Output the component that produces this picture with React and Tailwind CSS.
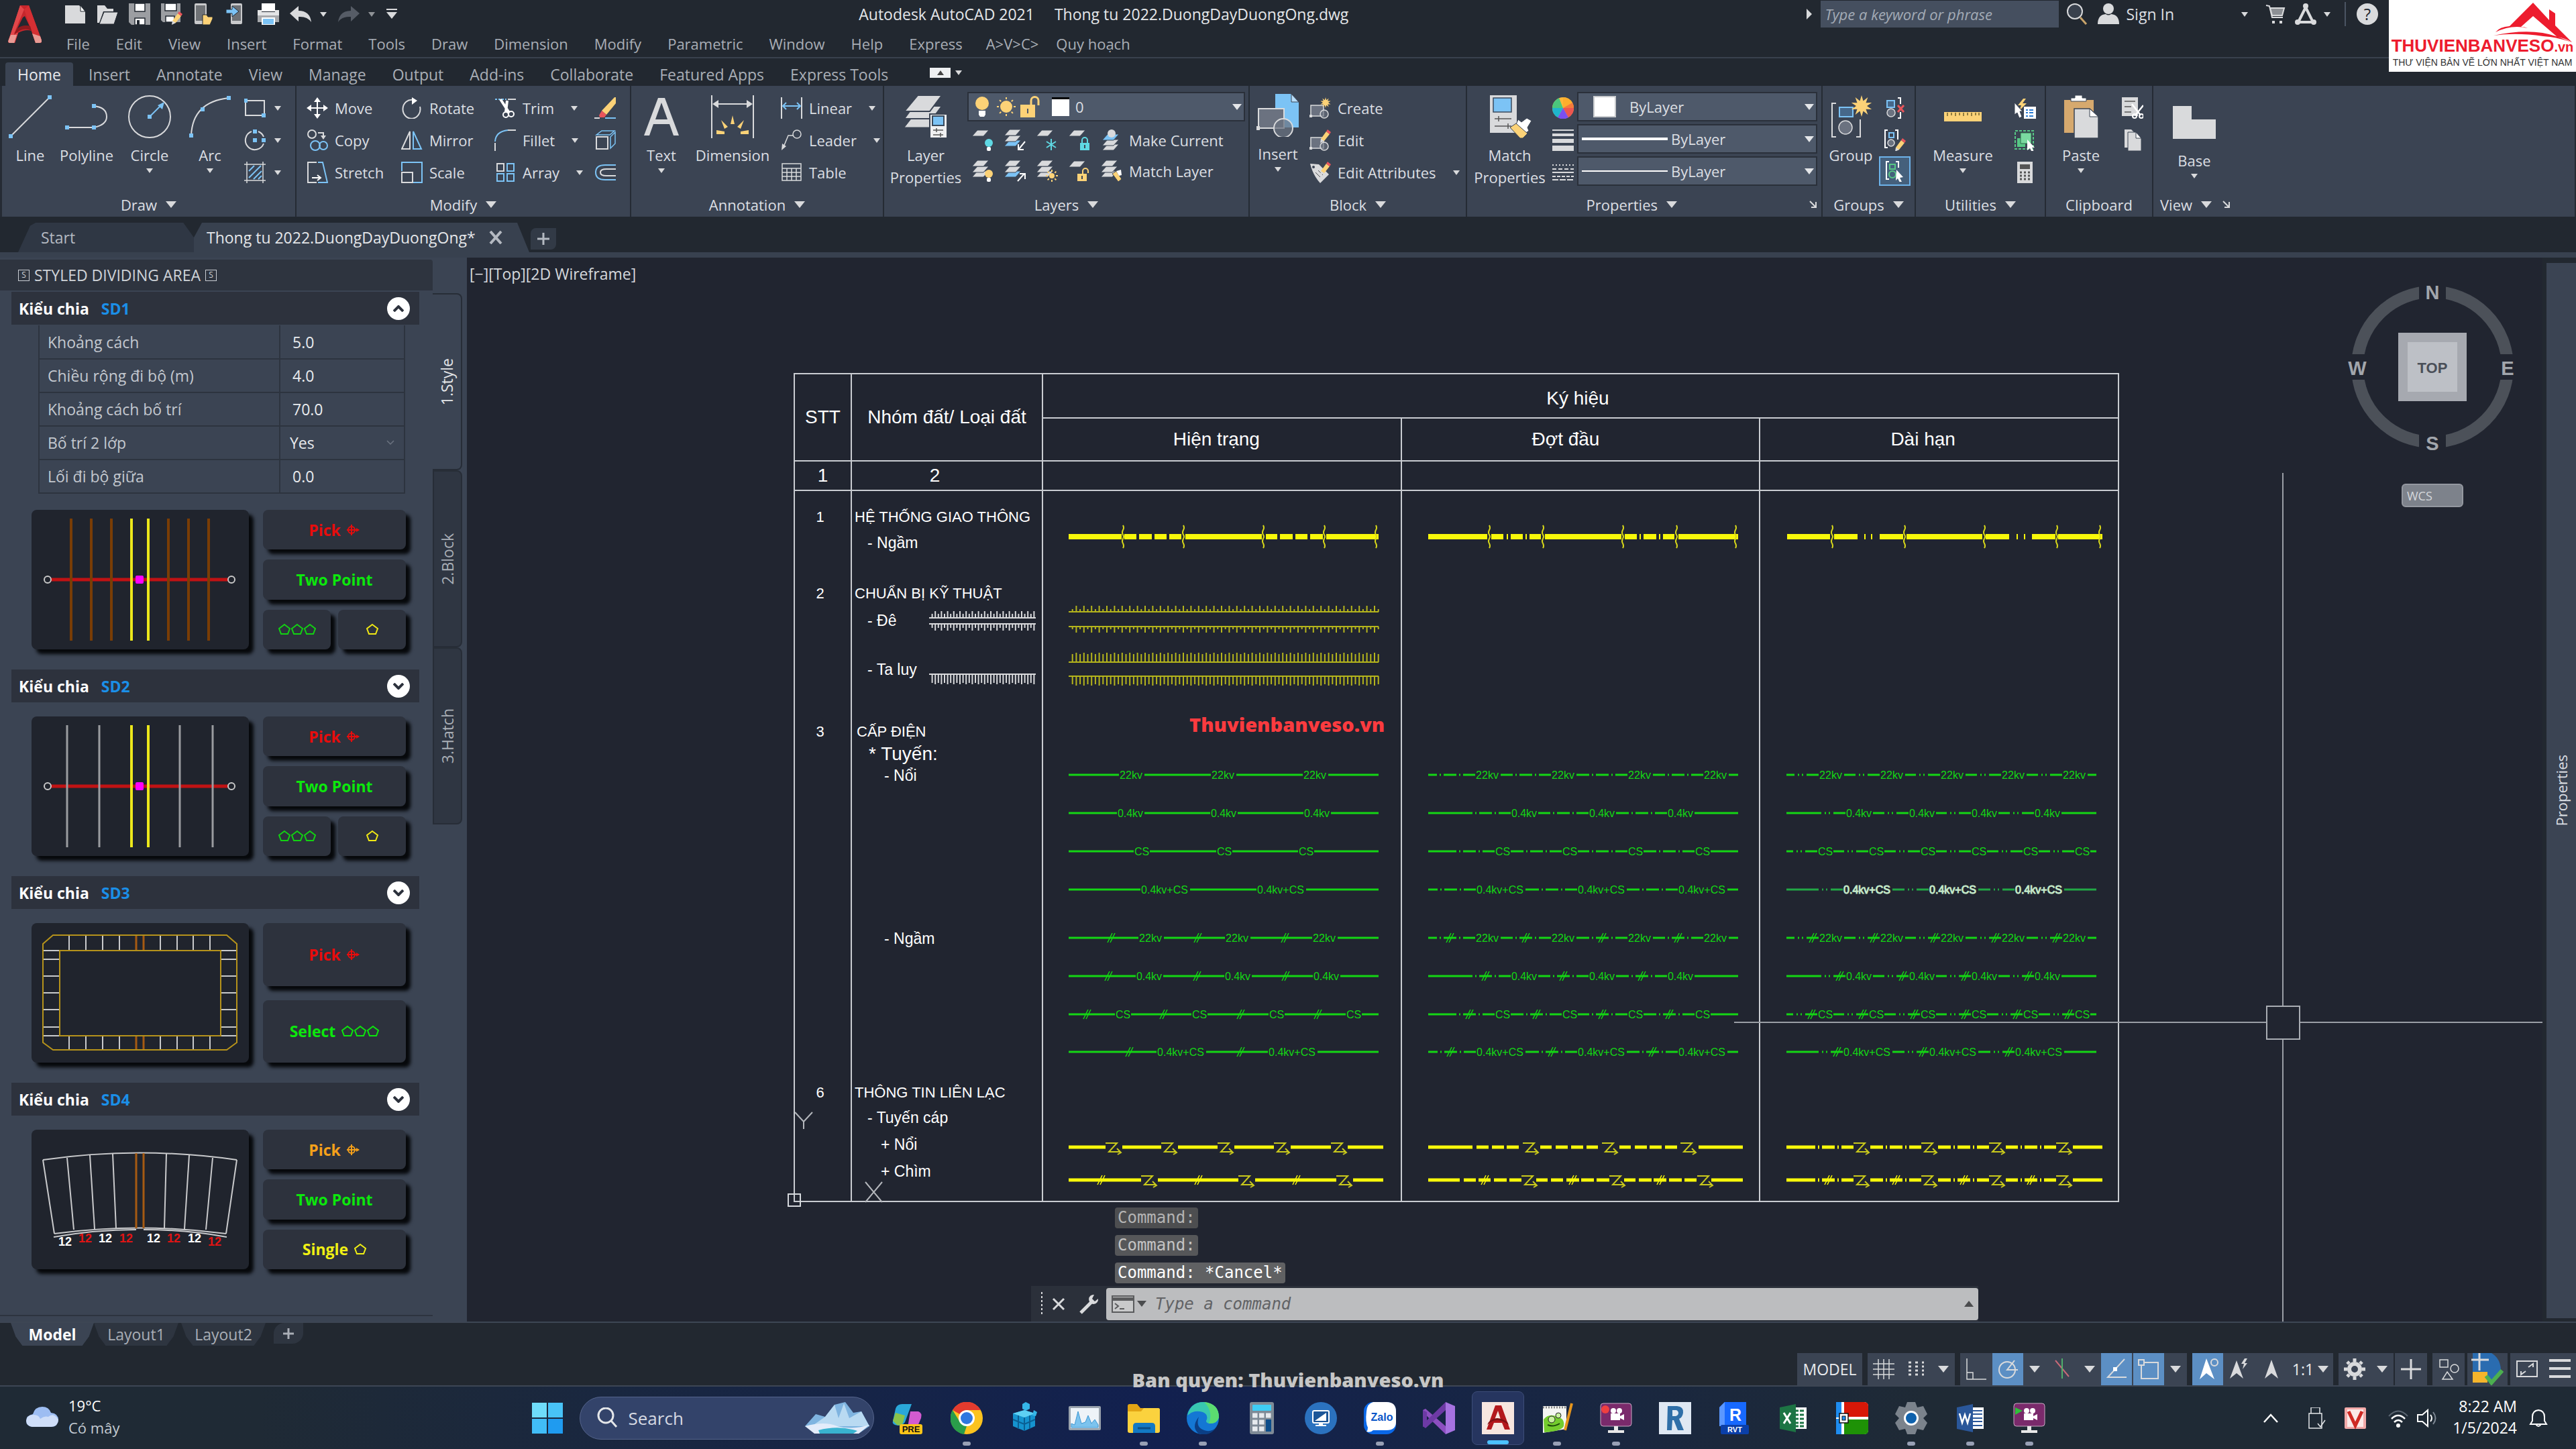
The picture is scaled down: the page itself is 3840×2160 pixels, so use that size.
import React from "react";

const W = "#d9dadc";
const B = "#7cc3f5";
const Y = "#fcd277";

/* ---------- icon primitives ---------- */

function Ico({ s = 32, w, h, vb, children, className = "" }) {
  return (
    <svg
      aria-hidden="true"
      width={w || s}
      height={h || s}
      viewBox={vb || "0 0 32 32"}
      fill="none"
      stroke={W}
      strokeWidth="2"
      className={"shrink-0 " + className}
    >
      {children}
    </svg>
  );
}

function Down({ big = false, className = "" }) {
  return big ? (
    <svg aria-hidden="true" width="16" height="10" viewBox="0 0 16 10" className={"shrink-0 " + className}>
      <path d="M0 0H16L8 10Z" fill={W} />
    </svg>
  ) : (
    <svg aria-hidden="true" width="10" height="7" viewBox="0 0 10 7" className={"shrink-0 " + className}>
      <path d="M0 0H10L5 7Z" fill={W} />
    </svg>
  );
}

const Dot = ({ x, y, r = 3 }) => <rect x={x - r} y={y - r} width={2 * r} height={2 * r} fill={B} stroke="none" />;
const Sheet = ({ x, y, c = W }) => <path d={`M${x + 8} ${y}h17l-8 9h-17z`} fill={c} stroke="#3b4453" strokeWidth="1" />;
const Pencil = ({ x = 0, y = 0 }) => (
  <g transform={`translate(${x} ${y})`} stroke="none">
    <path d="M2 14L10 3l5 4L7 17l-5 2z" fill={Y} />
    <path d="M10 3l2-3 5 4-2 3z" fill="#e9555b" />
    <path d="M2 14l5 3-6 3z" fill={W} />
  </g>
);
const Burst = ({ x, y, r }) => {
  let d = "";
  for (let i = 0; i < 20; i++) {
    const a = (i * Math.PI) / 10;
    const q = i % 2 ? r * 0.5 : r;
    d += (i ? "L" : "M") + (x + q * Math.sin(a)).toFixed(1) + " " + (y - q * Math.cos(a)).toFixed(1);
  }
  return <path d={d + "Z"} fill={Y} stroke="none" />;
};
const Bulb = ({ x, y, c = Y }) => (
  <g stroke="none">
    <circle cx={x} cy={y} r="6" fill={c} />
    <rect x={x - 3} y={y + 6} width="6" height="6" rx="2" fill="#fff" />
  </g>
);
const Lock = ({ x, y, c, open }) => (
  <g>
    <path d={open ? `M${x + 8} ${y + 8}v-4a4 4 0 0 1 8 0v3` : `M${x + 3} ${y + 8}v-4a4 4 0 0 1 8 0v4`} stroke={c} />
    <rect x={x} y={y + 8} width="14" height="11" fill={c} stroke="none" />
    <path d={`M${x + 7} ${y + 11}v5`} stroke="#3b4453" />
  </g>
);
const SunG = ({ x, y, r = 5 }) => (
  <g stroke={Y}>
    <circle cx={x} cy={y} r={r} fill={Y} stroke="none" />
    {[0, 45, 90, 135, 180, 225, 270, 315].map((a) => (
      <path key={a} d={`M${x} ${y - r - 2}v-3`} transform={`rotate(${a} ${x} ${y})`} />
    ))}
  </g>
);
const Stack = ({ c = W, y = 0 }) => (
  <g>
    <Sheet x={0} y={y + 16} c={c} />
    <Sheet x={0} y={y + 9} />
    <Sheet x={0} y={y} />
  </g>
);

/* ---------- title bar ---------- */

function AutocadA({ w = 50, h = 56 }) {
  return (
    <svg aria-hidden="true" width={w} height={h} viewBox="0 0 50 56">
      <path d="M18 0H31L50 52Q51 56 47 56H41L35 38Q26 35 15 41L10 56H3Q-1 56 1 51Z" fill="#c6262c" />
      <path d="M18 0L24 6 9 42 15 41 10 56H3Q-1 56 1 51Z" fill="#e2474a" />
      <path d="M22 18L13 36Q22 29 32 31L25 16Z" fill="#222830" />
      <path d="M31 0L50 52Q51 56 47 56H41L24 6Z" fill="#d52f33" />
      <path d="M9 44Q22 31 35 38L33 31Q22 28 13 35Z" fill="#8e1a1e" />
      <path d="M36 42L41 56H47Q51 56 50 52L48 46Z" fill="#e99a94" />
      <path d="M4 44L1 51Q-1 56 3 56H9L13 44Z" fill="#e99a94" />
    </svg>
  );
}

function QuickAccess() {
  const items = [
    ["New", "ml-0", <Ico key="i"><path d="M3 3H22L31 12V30H1V3Z" fill={W} stroke="none" /><path d="M24 3l7 9h-7z" fill="#fff" stroke="#222830" strokeWidth="1" /></Ico>],
    ["Open", "ml-4", <Ico key="i"><path d="M1 3h11l4 5h9v4H10L4 29H1z" fill={W} stroke="none" /><path d="M11 13h21l-6 18H4z" fill={W} stroke="#222830" strokeWidth="1" /></Ico>],
    ["Save", "ml-4", <Ico key="i"><path d="M0 0H32V32H4L0 28Z" fill="#9c9ea2" stroke="none" /><path d="M9 0H24V12H9ZM9 22H24V32H9Z" fill="#fff" stroke="#222830" strokeWidth="1.5" /><path d="M12 25h4v7h-4z" fill="#222830" stroke="none" /></Ico>],
    ["Save As", "ml-4", <Ico key="i"><path d="M0 0H29V28H3L0 25Z" fill="#9c9ea2" stroke="none" /><path d="M6 0H23V11H6ZM7 19H20V28H7Z" fill="#fff" stroke="#222830" strokeWidth="1.5" /><Pencil x={15} y={12} /></Ico>],
    ["Open from Web and Mobile", "ml-4", <Ico key="i"><rect x="2" y="0" width="18" height="31" rx="2" fill="#c9cacc" stroke="none" /><rect x="4" y="3" width="14" height="23" fill="#6f7276" stroke="none" /><path d="M14 17h6l2 3h7v3l-4 9H14z" fill={Y} stroke="#222830" strokeWidth="1" /></Ico>],
    ["Save to Web and Mobile", "ml-4", <Ico key="i"><rect x="8" y="0" width="17" height="31" rx="2" fill="#c9cacc" stroke="none" /><rect x="10" y="3" width="13" height="23" fill="#6f7276" stroke="none" /><path d="M1 9h9V4l10 8-10 8v-5H1z" fill={B} stroke="#222830" strokeWidth="1" /></Ico>],
    ["Plot", "ml-4", <Ico key="i"><rect x="6" y="0" width="20" height="12" fill="#fff" stroke="none" /><path d="M0 10H6V13H26V10H32V28H0Z" fill="#e3e4e5" stroke="none" /><path d="M0 18H32V28H0Z" fill="#a7a9ac" stroke="none" /><rect x="7" y="22" width="18" height="10" fill={B} stroke="#fff" /></Ico>],
    ["Undo", "ml-4", <Ico key="i"><path d="M0 15L13 4V11Q30 11 32 28Q26 19 13 20V27Z" fill={W} stroke="none" /></Ico>],
  ];
  return (
    <div className="flex h-[42px] items-center">
      {items.map(([n, m, icon]) => (
        <button key={n} type="button" aria-label={n} className={m}>{icon}</button>
      ))}
      <button type="button" aria-label="Undo history" className="ml-[13px]"><Down /></button>
      <button type="button" aria-label="Redo" className="ml-[17px]">
        <Ico><path d="M32 15L19 4V11Q2 11 0 28Q6 19 19 20V27Z" fill="#565c66" stroke="none" /></Ico>
      </button>
      <button type="button" aria-label="Redo history" className="ml-[13px]"><Down className="opacity-60" /></button>
      <button type="button" aria-label="Customize Quick Access Toolbar" className="ml-[17px]">
        <Ico w={16} h={16} vb="0 0 16 16"><path d="M0 1H16" /><path d="M0 5H16L8 15Z" fill={W} stroke="none" /></Ico>
      </button>
    </div>
  );
}

const menus = ["File", "Edit", "View", "Insert", "Format", "Tools", "Draw", "Dimension", "Modify", "Parametric", "Window", "Help", "Express"];

function Header() {
  return (
    <header className="relative flex border-b-2 border-[#39414d] bg-[#222830]">
      <button type="button" aria-label="Application menu" className="ml-3 mt-2 h-14 w-[50px] shrink-0"><AutocadA /></button>
      <div className="ml-[34px] flex min-w-0 flex-1 flex-col">
        <div className="flex h-[42px] items-center">
          <div className="flex flex-1 items-center"><QuickAccess /></div>
          <div className="flex gap-[30px] whitespace-pre text-[23px] text-[#e4e6e9]">
            <span>Autodesk AutoCAD 2021</span>
            <span>Thong tu 2022.DuongDayDuongOng.dwg</span>
          </div>
          <div className="flex flex-[1.545] items-center justify-end">
            <Ico w={8} h={16} vb="0 0 8 16"><path d="M0 0L8 8L0 16Z" fill={W} stroke="none" /></Ico>
            <input aria-label="Search" placeholder="Type a keyword or phrase" className="ml-[13px] h-10 w-[355px] bg-[#454f5f] px-[6px] italic text-white outline-none placeholder:text-[#a3abb6]" />
            <button type="button" aria-label="Find" className="ml-[11px]">
              <Ico><circle cx="13" cy="12" r="11" fill="#39414d" /><path d="M21 21l9 10" stroke="#c9a46a" strokeWidth="3" /></Ico>
            </button>
            <button type="button" className="ml-[15px] flex items-center gap-[10px] text-[23px] text-[#dcdfe3]">
              <Ico><circle cx="16" cy="8" r="8" fill={W} stroke="none" /><path d="M0 31Q0 17 12 16Q16 19 20 16Q32 17 32 31Z" fill={W} stroke="none" /></Ico>
              Sign In
            </button>
            <button type="button" aria-label="Sign in options" className="ml-[100px]"><Down /></button>
            <button type="button" aria-label="App Store" className="ml-[26px]">
              <Ico><path d="M1 3l5 1 4 17h16" /><path d="M7 7h21l-3 11H10z" fill="#8d9095" /><path d="M10 26h4v4h-4zM21 26h4v4h-4z" fill={W} stroke="none" /></Ico>
            </button>
            <button type="button" aria-label="Autodesk App" className="ml-[12px]">
              <Ico><path d="M16 6L5 28M16 6L27 28M5 28H27" strokeWidth="4" /><circle cx="16" cy="4" r="4" fill={W} stroke="none" /><circle cx="4" cy="28" r="4" fill={W} stroke="none" /><circle cx="28" cy="28" r="4" fill={W} stroke="none" /></Ico>
            </button>
            <button type="button" aria-label="App options" className="ml-[11px]"><Down /></button>
            <span className="ml-[21px] h-9 w-[2px] bg-[#4b5563]" />
            <button type="button" aria-label="Help" className="ml-4 mr-[295px] flex h-8 w-8 items-center justify-center rounded-full bg-[#d9dadc] text-[24px] leading-8 text-[#222830]">?</button>
          </div>
        </div>
        <nav className="flex h-[43px] items-center pl-[3px] pt-[4px] leading-[39px] text-[#a9aeb6]">
          {menus.map((m) => (
            <button key={m} type="button" className="mr-[39px]">{m}</button>
          ))}
          <button type="button" className="-ml-1 mr-[26px]">A&gt;V&gt;C&gt;</button>
          <button type="button">Quy hoạch</button>
        </nav>
      </div>
      <div className="absolute right-0 top-0 z-10 flex h-[107px] w-[279px] flex-col items-center justify-end bg-white pb-[5px]">
        <svg aria-hidden="true" width="120" height="64" viewBox="0 0 120 64" className="absolute right-1 top-0" fill="#ed1c2e">
          <path d="M60 4L84 30V14L93 20V38L118 63Q108 57 96 55L60 24L42 40Q48 40 52 42Q28 36 4 48Q10 40 25 39Z" />
          <path d="M1 53Q60 40 100 56Q110 60 118 63Q95 55 75 54Q35 48 1 53Z" />
        </svg>
        <p className="text-[26px] font-bold leading-[28px] text-[#ed1c2e] [font-family:'Liberation_Sans',sans-serif]">THUVIENBANVESO<span className="text-[20px]">.vn</span></p>
        <p className="whitespace-nowrap text-[14px] leading-[18px] text-[#333] [font-family:'Liberation_Sans',sans-serif]">THƯ VIỆN BẢN VẼ LỚN NHẤT VIỆT NAM</p>
      </div>
    </header>
  );
}

/* ---------- ribbon ---------- */

const ribbonTabs = ["Insert", "Annotate", "View", "Manage", "Output", "Add-ins", "Collaborate", "Featured Apps", "Express Tools"];

function RibbonTabs() {
  return (
    <div className="flex h-[41px] items-end bg-[#222830] pl-2 text-[23px] text-[#a9aeb6]">
      <button type="button" className="h-[35px] w-[101px] rounded-t bg-[#3b4453] text-center text-[#e8eaed]">Home</button>
      <div className="ml-[23px] flex h-[35px] items-center gap-[39px]">
        {ribbonTabs.map((t) => (
          <button key={t} type="button">{t}</button>
        ))}
      </div>
      <button type="button" aria-label="Minimize ribbon" className="mb-3 ml-[62px] flex h-[15px] w-[31px] items-center justify-center bg-[#eef0f2]">
        <svg aria-hidden="true" width="10" height="7" viewBox="0 0 10 7"><path d="M0 7H10L5 0Z" fill="#444" /></svg>
      </button>
      <button type="button" aria-label="Ribbon options" className="mb-4 ml-[7px]"><Down /></button>
    </div>
  );
}

function Panel({ title, width, arrow = true, corner = false, align = "justify-center", children }) {
  return (
    <section className={"flex flex-col border-r-2 border-[#252b34] bg-[#3b4453] " + width}>
      <div className="flex h-[162px] items-start">{children}</div>
      <div className={"flex h-[33px] items-center pb-1 " + align}>
        <button type="button" className="flex items-center gap-[13px]">
          {title}
          {arrow && <Down big />}
        </button>
        {corner && (
          <button type="button" aria-label={title + " settings"} className={corner}>
            <Ico w={12} h={12} vb="0 0 12 12"><path d="M1 1L10 10M10 2V10H3" /></Ico>
          </button>
        )}
      </div>
    </section>
  );
}

function Big({ label, width, icon, arrow = false, pad = "pt-[14px]" }) {
  return (
    <button type="button" className={"flex shrink-0 flex-col items-center " + pad + " " + width}>
      <span className="flex h-16 items-center">{icon}</span>
      <span className="mt-[9px] whitespace-pre-line text-center leading-[33px]">{label}</span>
      {arrow && <Down className="mt-[3px]" />}
    </button>
  );
}

function Small({ label, icon, arrow = false, gap = "gap-[10px]", aria }) {
  return (
    <div className="flex h-12 items-center whitespace-nowrap">
      <button type="button" aria-label={aria || label} className={"flex items-center " + gap}>
        {icon}
        {label}
      </button>
      {arrow && (
        <button type="button" aria-label={(aria || label) + " options"} className={label ? "ml-[25px]" : "ml-[13px]"}><Down /></button>
      )}
    </div>
  );
}

const Col = ({ className = "", children }) => <div className={"flex shrink-0 flex-col pt-[9px] " + className}>{children}</div>;

const attrIcon = (
  <g>
    <rect x="2" y="12" width="19" height="16" fill="#6b7280" strokeWidth="1.5" />
    <circle cx="22" cy="25" r="6" fill="#6b7280aa" strokeWidth="1.5" />
    <rect x="0" y="26" width="4" height="4" fill={W} stroke="none" />
  </g>
);

function Combo({ label, value, lead, pad = "pl-0" }) {
  return (
    <div className="relative flex h-[44px] items-center border-2 border-[#2a303a] bg-[#4e596a]">
      {lead}
      <select aria-label={label} defaultValue={value} className={"h-full flex-1 appearance-none bg-transparent text-[#dcdfe3] outline-none " + pad}>
        <option>{value}</option>
      </select>
      <svg aria-hidden="true" width="14" height="9" viewBox="0 0 14 9" className="pointer-events-none absolute right-[3px] top-4"><path d="M0 0H14L7 9Z" fill="#e4e6e9" /></svg>
    </div>
  );
}

function Ribbon() {
  return (
    <div className="flex h-[195px] bg-[#252b34] pl-[3px] text-[#dcdfe3]">
      <Panel title="Draw" width="w-[439px]">
        <Big label="Line" width="ml-[7px] w-[70px]" icon={<Ico s={64} vb="0 0 64 64"><path d="M3 61L61 3" /><Dot x={3} y={61} /><Dot x={61} y={3} /></Ico>} />
        <Big label="Polyline" width="w-[98px]" icon={<Ico s={64} vb="0 0 64 64"><path d="M3 48H43Q62 44 62 32Q62 18 43 16" /><Dot x={3} y={48} /><Dot x={43} y={48} /><Dot x={43} y={16} /></Ico>} />
        <Big label="Circle" width="w-[90px]" arrow icon={<Ico s={64} vb="0 0 64 64"><circle cx="32" cy="32" r="31" /><path d="M32 32L50 14" stroke={B} /><path d="M54 10l-3 11-7-6z" fill={B} stroke="none" /><Dot x={32} y={32} /></Ico>} />
        <Big label="Arc" width="w-[90px]" arrow icon={<Ico s={64} vb="0 0 64 64"><path d="M4 60Q6 10 60 4" /><Dot x={4} y={60} /><Dot x={21} y={21} /><Dot x={60} y={4} /></Ico>} />
        <Col className="ml-[6px]">
          <Small aria="Rectangle" arrow icon={<Ico><rect x="2" y="5" width="28" height="22" /><Dot x={2} y={5} /><Dot x={29} y={27} /></Ico>} />
          <Small aria="Ellipse" arrow icon={<Ico><path d="M21 3A14 14 0 0 1 29 11M29 21A14 14 0 1 1 11 3" /><Dot x={16} y={3} /><Dot x={16} y={16} /><Dot x={29} y={16} /></Ico>} />
          <Small aria="Hatch" arrow icon={<Ico><path d="M0 4H32M0 28H32M4 0V32M28 0V32" strokeWidth="1.5" /><path d="M7 14L15 6M7 24L25 6M14 26L26 14M21 26l5-5" stroke={B} /></Ico>} />
        </Col>
      </Panel>

      <Panel title="Modify" width="w-[499px]">
        <Col className="ml-[15px] w-[141px]">
          <Small label="Move" icon={<Ico><path d="M16 4V28M4 16H28" stroke="#fff" /><path d="M16 0l5 7H11zM16 32l5-7H11zM0 16l7-5v10zM32 16l-7-5v10z" fill="#fff" stroke="none" /></Ico>} />
          <Small label="Copy" icon={<Ico><circle cx="8" cy="7" r="6" /><path d="M17 5h8v6" /><path d="M25 15l-4-6h8z" fill={W} stroke="none" /><circle cx="13" cy="24" r="7" stroke={B} /><circle cx="25" cy="24" r="6" stroke={B} /></Ico>} />
          <Small label="Stretch" icon={<Ico><path d="M15 1H2V31H15" /><path d="M17 1h7l7 30H17" stroke={B} /><path d="M8 24H20M16 20l5 4-5 4" stroke="#fff" /></Ico>} />
        </Col>
        <Col className="w-[139px]">
          <Small label="Rotate" icon={<Ico><path d="M18 4A13 14 0 1 0 28 14" /><path d="M16 0l8 5-8 6z" fill="#fff" stroke="none" /></Ico>} />
          <Small label="Mirror" icon={<Ico><path d="M13 3V29H1Z" /><path d="M18 3V29H30Z" stroke={B} /></Ico>} />
          <Small label="Scale" icon={<Ico><path d="M1 14V1H31V31H18" stroke={B} /><rect x="1" y="16" width="16" height="15" /></Ico>} />
        </Col>
        <Col className="w-[149px]">
          <Small label="Trim" arrow icon={<Ico><path d="M1 3H18" stroke={B} strokeDasharray="3 2" /><path d="M20 3H32" /><path d="M9 3L22 23M19 5L17 22" stroke="#fff" strokeWidth="4" /><circle cx="17" cy="26" r="4" stroke="#fff" /><circle cx="25" cy="25" r="4" stroke="#fff" /></Ico>} />
          <Small label="Fillet" arrow icon={<Ico><path d="M1 18Q2 3 20 1" stroke={B} /><path d="M20 1H32M1 20V32" /></Ico>} />
          <Small label="Array" arrow icon={<Ico><rect x="4" y="3" width="10" height="11" /><rect x="19" y="3" width="10" height="11" stroke={B} /><rect x="4" y="18" width="10" height="11" stroke={B} /><rect x="19" y="18" width="10" height="11" stroke={B} /></Ico>} />
        </Col>
        <Col>
          <Small aria="Erase" icon={<Ico><path d="M11 20L30 0h2v9L18 26z" fill={Y} stroke="none" /><path d="M11 20l7 6-3 4H8l-1-3z" fill="#e9555b" stroke="none" /><path d="M0 31h8" /><path d="M16 31H32" stroke={B} /></Ico>} />
          <Small aria="Explode" icon={<Ico><rect x="3" y="11" width="17" height="18" /><path d="M3 8L11 2H30L23 8ZM31 4V21L24 28V11Z" stroke={B} strokeWidth="1.5" /></Ico>} />
          <Small aria="Offset" icon={<Ico><path d="M32 5H16Q2 5 2 16Q2 27 16 27H32" stroke={B} /><path d="M32 11H18Q9 11 9 16Q9 21 18 21H32" /></Ico>} />
        </Col>
      </Panel>

      <Panel title="Annotation" width="w-[377px]">
        <Big label="Text" width="w-[90px]" arrow icon={<Ico w={52} h={56} vb="0 0 52 56"><path d="M0 56L21 0h10l21 56h-8l-6-17H14L8 56zM17 32h18L26 7z" fill={W} stroke="none" /></Ico>} />
        <Big label="Dimension" width="w-[122px]" icon={<Ico s={64} vb="0 0 64 64"><path d="M1 0V64M63 0V64M4 13H60" /><path d="M2 13l9-6v12zM62 13l-9-6v12z" fill={W} stroke="none" /><g fill={Y} stroke="none"><path d="M32 30l3 13h-6zM15 37l10 10-5 3zM49 37L39 47l5 3zM8 52l12 2v4H8zM56 52l-12 2v4h12z" /></g></Ico>} />
        <Col className="ml-[11px]">
          <Small label="Linear" arrow icon={<Ico><path d="M1 0V32M31 0V32" /><path d="M3 13H29M8 8l-5 5 5 5M24 8l5 5-5 5" stroke={B} /></Ico>} />
          <Small label="Leader" arrow icon={<Ico><circle cx="24" cy="7" r="6" strokeWidth="1.5" /><path d="M18 9h-7L4 26" strokeWidth="1.5" /><path d="M1 31l1-10 6 4z" fill={W} stroke="none" /></Ico>} />
          <Small label="Table" icon={<Ico><rect x="2" y="3" width="28" height="25" strokeWidth="1.5" /><path d="M2 10H30M2 16H30M2 22H30M9 10V28M16 10V28M23 10V28" strokeWidth="1.5" /></Ico>} />
        </Col>
      </Panel>

      <Panel title="Layers" width="w-[545px]">
        <Big label={"Layer\nProperties"} width="w-[124px]" icon={<Ico s={64} vb="0 0 64 64"><path d="M14 30H56L42 48H0Z" fill={W} stroke="#3b4453" strokeWidth="1" /><path d="M14 16H56L42 35H0Z" fill={W} stroke="#3b4453" /><path d="M20 0H56L38 24H0Z" fill={W} stroke="#3b4453" /><rect x="38" y="28" width="26" height="36" fill="#f0f1f2" stroke="#3b4453" /><rect x="42" y="31" width="17" height="14" fill={B} stroke="#3a4a5c" /><path d="M43 52H58M43 59H58M48 49v6M54 56v6" stroke="#555" strokeWidth="1.5" /></Ico>} />
        <Col className="w-[414px]">
          <Combo label="Layer" value="0" lead={
            <span className="ml-2 flex items-center gap-1">
              <Ico w={28} h={32} vb="0 0 28 32"><circle cx="12" cy="11" r="10" fill={Y} stroke="none" /><path d="M7 22H17V28L15 31H9L7 28Z" fill="#fff" stroke="none" /></Ico>
              <Ico><SunG x={16} y={16} r={9} /></Ico>
              <Ico><path d="M17 15V7a5 5 0 0 1 11 0v7" stroke={Y} strokeWidth="3" /><rect x="1" y="13" width="22" height="19" fill={Y} stroke="none" /><path d="M12 19v7" stroke="#4e596a" /></Ico>
              <span className="ml-3 h-[28px] w-[26px] border-t-[3px] border-black bg-white" />
            </span>
          } pad="pl-[9px]" />
          <div className="flex h-[52px] items-center gap-4 pl-[7px] pt-1">
            <button type="button" aria-label="Layer off"><Ico><Sheet x={0} y={1} /><Bulb x={25} y={20} c="#5fd8e3" /></Ico></button>
            <button type="button" aria-label="Isolate"><Ico><Stack c={B} /><path d="M31 18L22 29M21 22v8h8" stroke="#fff" /></Ico></button>
            <button type="button" aria-label="Freeze"><Ico><Sheet x={0} y={1} /><path d="M22 14V31M15 18l14 9M29 18L15 27" stroke="#5fd8e3" /></Ico></button>
            <button type="button" aria-label="Lock"><Ico><Sheet x={0} y={1} /><Lock x={17} y={12} c="#5fd8e3" /></Ico></button>
            <button type="button" className="flex items-center gap-[10px]"><Ico><Sheet x={2} y={22} /><Sheet x={2} y={15} /><Sheet x={2} y={7} c={B} /><circle cx="16" cy="6" r="6" fill={W} stroke="none" /></Ico>Make Current</button>
          </div>
          <div className="flex h-[44px] items-center gap-4 pl-[7px]">
            <button type="button" aria-label="Turn all layers on"><Ico><Stack /><Bulb x={25} y={20} /></Ico></button>
            <button type="button" aria-label="Unisolate"><Ico><Stack c={B} /><path d="M20 31L30 20M23 20h8v8" stroke="#fff" /></Ico></button>
            <button type="button" aria-label="Thaw all layers"><Ico><Stack /><SunG x={23} y={23} r={4} /></Ico></button>
            <button type="button" aria-label="Unlock"><Ico><Sheet x={0} y={1} /><Lock x={13} y={12} c={Y} open /></Ico></button>
            <button type="button" className="flex items-center gap-[10px]"><Ico><Stack /><path d="M17 20l6-4 8 12-5 4z" fill={Y} stroke="#3b4453" strokeWidth="1" /><path d="M23 16l7-2 1 8-4 1z" fill="#fff" stroke="none" /></Ico>Match Layer</button>
          </div>
        </Col>
      </Panel>

      <Panel title="Block" width="w-[324px]">
        <Big label="Insert" width="w-[84px]" arrow pad="pt-[12px]" icon={<Ico s={64} vb="0 0 64 64"><path d="M28 0H52L63 12V50H28Z" fill={B} stroke="none" /><path d="M52 0V12H63Z" fill="#b9defa" stroke="#3b4453" strokeWidth="1" /><rect x="3" y="22" width="38" height="29" fill="#6b7280" /><circle cx="40" cy="51" r="14" fill="#6b7280bb" /><rect x="0" y="48" width="5" height="6" fill={W} stroke="none" /></Ico>} />
        <Col className="ml-[5px]">
          <Small label="Create" icon={<Ico>{attrIcon}<Burst x={24} y={8} r={8} /></Ico>} />
          <Small label="Edit" icon={<Ico>{attrIcon}<Pencil x={15} y={0} /></Ico>} />
          <Small label="Edit Attributes" arrow icon={<Ico><path d="M1 3L14 4 29 19 16 32Q5 20 1 3Z" fill={W} stroke="none" /><circle cx="6" cy="8" r="2" fill="#3b4453" stroke="none" /><path d="M9 16l7 7M13 13l7 7" stroke="#555" strokeWidth="1" /><Pencil x={15} y={0} /></Ico>} />
        </Col>
      </Panel>

      <Panel title="Properties" width="w-[530px]" align="justify-end" corner="ml-[197px] mr-[6px]">
        <Big label={"Match\nProperties"} width="w-[127px]" icon={<Ico s={64} vb="0 0 64 64"><rect x="2" y="0" width="40" height="56" fill={W} stroke="none" /><rect x="7" y="4" width="27" height="21" fill={B} stroke="#3a4a5c" strokeWidth="1.5" /><path d="M9 35H34M15 31v8M9 46H34M29 42v8" stroke="#555" strokeWidth="1.5" /><path d="M44 36l5 4 8-6 7 4-6 10 2 5-6 4-14-11z" fill="#fff" stroke="#3b4453" strokeWidth="1" /><path d="M32 48l9-6 17 15-7 7H47z" fill={Y} stroke="#3b4453" strokeWidth="1" /></Ico>} />
        <Col>
          <Small aria="Object color" icon={<Ico><g stroke="none"><circle cx="16" cy="16" r="16" fill="#fdb83a" /><path d="M16 16L16 0A16 16 0 0 1 30 8Z" fill="#fcae2d" /><path d="M16 16L30 8A16 16 0 0 1 32 16Z" fill="#f47a3b" /><path d="M16 16H32A16 16 0 0 1 24 30Z" fill="#ed5650" /><path d="M16 16L24 30A16 16 0 0 1 8 30Z" fill="#7a4ff0" /><path d="M16 16L8 30A16 16 0 0 1 0 16Z" fill="#1fb5cc" /><path d="M16 16H0A16 16 0 0 1 10 1Z" fill="#4bc77d" /></g></Ico>} />
          <Small aria="Lineweight" icon={<Ico><path d="M0 1H32" /><path d="M0 8H32" strokeWidth="4" /><path d="M0 17H32" strokeWidth="6" /><path d="M0 28H32" strokeWidth="8" /></Ico>} />
          <Small aria="Linetype" icon={<Ico><path d="M0 5H32" strokeDasharray="2 3" /><path d="M0 11H32" strokeDasharray="6 3" /><path d="M0 16H32" /><path d="M0 22H32" strokeDasharray="5 2" /><path d="M0 27H32" strokeDasharray="9 2" /></Ico>} />
        </Col>
        <Col className="ml-[5px] w-[358px] gap-1">
          <Combo label="Object color" value="ByLayer" lead={<span className="ml-[22px] h-8 w-[34px] border-2 border-[#c9cbce] bg-white" />} pad="pl-[20px]" />
          <Combo label="Lineweight" value="ByLayer" lead={<span className="ml-[5px] h-1 w-[128px] bg-white" />} pad="pl-[5px]" />
          <Combo label="Linetype" value="ByLayer" lead={<span className="ml-[5px] h-[2px] w-[128px] bg-white" />} pad="pl-[5px]" />
        </Col>
      </Panel>

      <Panel title="Groups" width="w-[139px]">
        <Big label="Group" width="w-[84px]" icon={<Ico s={64} vb="0 0 64 64"><path d="M10 12H4V62H10M40 62H46V36" /><rect x="15" y="18" width="20" height="14" fill="#46688a" stroke={B} /><circle cx="24" cy="48" r="10" fill="#6b7280" strokeWidth="1.5" /><Burst x={48} y={16} r={16} /></Ico>} />
        <Col className="w-[47px] items-center">
          <Small aria="Ungroup" icon={<Ico><path d="M20 1h4v9M24 22v9h-4" stroke="#fff" /><rect x="4" y="5" width="11" height="10" fill="#46688a" stroke={B} /><circle cx="10" cy="23" r="6" fill="#6b7280" strokeWidth="1.5" /><path d="M20 12l9 10M29 12l-9 10" stroke="#e9555b" strokeWidth="3" /></Ico>} />
          <Small aria="Group edit" icon={<Ico><path d="M5 1H1V27H5M16 1h4v14" stroke="#fff" /><rect x="7" y="5" width="7" height="7" stroke={B} /><circle cx="10" cy="20" r="5" fill="#6b7280" strokeWidth="1.5" /><Pencil x={15} y={13} /></Ico>} />
          <button type="button" aria-label="Group selection on/off" aria-pressed="true" className="flex h-11 w-[47px] items-center justify-center border-2 border-[#6db3ea] bg-[#45607c]">
            <Ico><path d="M7 2H3V28H7M17 2h4v9" stroke="#fff" /><rect x="8" y="6" width="8" height="7" stroke="#57c785" /><circle cx="12" cy="21" r="5" stroke="#57c785" /><path d="M18 14l10 11-5 1 3 6-3 1-3-6-3 3z" fill="#fff" stroke="none" /></Ico>
          </button>
        </Col>
      </Panel>

      <Panel title="Utilities" width="w-[194px]">
        <Big label="Measure" width="w-[140px]" arrow icon={<Ico w={56} h={16} vb="0 0 56 16"><path d="M0 1H56V15H0Z" fill={Y} stroke="none" /><path d="M5 2v5M11 2v4M17 2v5M23 2v4M29 2v5M35 2v4M41 2v5M47 2v4M52 2v4" stroke="#70612f" strokeWidth="1.5" /></Ico>} />
        <Col className="ml-[7px]">
          <Small aria="Quick Select" icon={<Ico><path d="M13 2L5 12h5l-3 8 11-11h-6l5-7z" fill={Y} stroke="none" /><rect x="14" y="14" width="18" height="18" fill="#fff" stroke="none" /><path d="M17 19h3M17 23h3M17 28h3M22 19h6M22 23h6M22 28h6" stroke="#2b7cd3" /><path d="M0 8l12 13H8l3 8-4 2-3-8-4 3z" fill="#fff" stroke="#3b4453" strokeWidth="1" /></Ico>} />
          <Small aria="Select All" icon={<Ico><rect x="1" y="2" width="27" height="27" stroke="#57c785" strokeDasharray="4 2" /><path d="M4 13H16V26H4Z" fill="#57c785" stroke="none" /><path d="M9 5H25V21H9Z" fill="#7ad9a0" stroke="#2d6b49" strokeWidth="1" /><path d="M19 15l11 12h-4l3 6-3 1-3-6-4 3z" fill="#fff" stroke="none" /></Ico>} />
          <Small aria="Quick Calculator" icon={<Ico><rect x="4" y="0" width="23" height="32" fill={W} stroke="none" /><rect x="8" y="4" width="15" height="7" fill="#555" stroke="none" /><path d="M8 16H23M8 21H23M8 26H23" stroke="#555" strokeWidth="3" strokeDasharray="3 3" /></Ico>} />
        </Col>
      </Panel>

      <Panel title="Clipboard" width="w-[160px]" arrow={false}>
        <Big label="Paste" width="w-[104px]" arrow icon={<Ico s={64} vb="0 0 64 64"><rect x="7" y="7" width="44" height="49" fill="#d6a96e" stroke="none" /><path d="M23 0H34V4H40V9H17V4H23Z" fill="#fff" stroke="#3b4453" strokeWidth="1" /><path d="M22 20H45L58 32V64H22Z" fill={W} stroke="#3b4453" strokeWidth="1.5" /><path d="M45 20V32H58Z" fill="#fff" stroke="#3b4453" strokeWidth="1" /></Ico>} />
        <Col className="ml-[9px]">
          <Small aria="Cut" icon={<Ico><path d="M0 0H24V28H0Z" fill={W} stroke="none" /><path d="M4 6H20M4 14H14M4 22H14" stroke="#555" strokeWidth="1.5" /><path d="M15 10L28 27M32 12L20 27" stroke="#fff" strokeWidth="2.5" /><circle cx="19" cy="28" r="3" stroke="#fff" /><circle cx="29" cy="28" r="3" stroke="#fff" /></Ico>} />
          <Small aria="Copy clip" icon={<Ico><path d="M4 0H14L20 6V27H4Z" fill={W} stroke="none" /><path d="M9 4H21L29 13V32H9Z" fill={W} stroke="#3b4453" strokeWidth="1" /><path d="M21 4v9h8z" fill="#fff" stroke="#3b4453" strokeWidth="1" /></Ico>} />
        </Col>
      </Panel>

      <Panel title="View" width="min-w-0 flex-1" align="justify-start pl-[10px]" corner="ml-4">
        <Big label="Base" width="w-[122px]" arrow pad="pt-[22px]" icon={<Ico s={64} vb="0 0 64 64"><path d="M0 8H28V28H64V57H0Z" fill={W} stroke="none" /></Ico>} />
      </Panel>
    </div>
  );
}

function FileTabs() {
  return (
    <div className="flex h-[61px] items-end border-b-[8px] border-[#38414f] bg-[#222830] pl-[27px] text-[23px]">
      <button type="button" className="h-11 w-[262px] bg-[#2f3744] pl-[34px] text-left text-[#b4b9c1] [clip-path:polygon(0_100%,18px_10%,26px_0,94%_0,100%_50%,100%_100%)]">Start</button>
      <div className="flex h-11 w-[500px] items-center bg-[#38414f] pl-[19px] text-[#e4e6e9] [clip-path:polygon(0_50%,12px_0,482px_0,100%_100%,0_100%)]">
        <button type="button">Thong tu 2022.DuongDayDuongOng*</button>
        <button type="button" aria-label="Close drawing" className="ml-[20px]">
          <Ico w={20} h={20} vb="0 0 20 20"><path d="M2 1L18 19M18 1L2 19" strokeWidth="4" stroke="#b4b9c1" /></Ico>
        </button>
      </div>
      <button type="button" aria-label="New drawing" className="mb-1 ml-[2px] flex h-[32px] w-[38px] items-center justify-center rounded-br-lg rounded-tl-lg bg-[#323a46]">
        <Ico w={18} h={18} vb="0 0 18 18"><path d="M9 0V18M0 9H18" strokeWidth="3" stroke="#b4b9c1" /></Ico>
      </button>
    </div>
  );
}

/* ---------- left palette ---------- */

const SBox = () => (
  <span className="flex h-[17px] w-[17px] items-center justify-center border border-[#c9cdd3] text-[12px] leading-none">S</span>
);

const Penta = ({ n = 1 }) => (
  <svg aria-hidden="true" width={n * 19 - 1} height="18" viewBox={`0 0 ${n * 19 - 1} 18`} fill="none" stroke="currentColor" strokeWidth="2">
    {Array.from({ length: n }, (_, i) => (
      <path key={i} d="M9 2L17 8L14 16H4L1 8Z" transform={`translate(${i * 19} 0)`} />
    ))}
  </svg>
);

const PickMark = () => (
  <svg aria-hidden="true" width="20" height="18" viewBox="0 0 20 18" fill="none" stroke="currentColor" strokeWidth="2">
    <circle cx="7" cy="9" r="5" /><path d="M0 9H18M7 1V17" /><path d="M14 6l5 3-5 3z" fill="currentColor" stroke="none" />
  </svg>
);

function Act({ className = "", children, label }) {
  return (
    <button type="button" aria-label={label} className={"flex flex-1 items-center justify-center gap-[9px] rounded-lg bg-[#2d323d] font-bold shadow-[7px_7px_5px_#07090c] " + className}>
      {children}
    </button>
  );
}

const Preview = ({ children }) => (
  <svg aria-hidden="true" width="324" height="208" viewBox="0 0 324 208" fill="none" className="shrink-0 rounded-lg bg-[#20242d] shadow-[7px_7px_5px_#07090c]">
    {children}
  </svg>
);

const Baseline = () => (
  <g>
    <path d="M24 104H298" stroke="#c01214" strokeWidth="5" />
    <circle cx="24" cy="104" r="5" stroke="#c9c9c9" strokeWidth="2" fill="#20242d" />
    <circle cx="298" cy="104" r="5" stroke="#c9c9c9" strokeWidth="2" fill="#20242d" />
  </g>
);

const Verticals = ({ xs, color, w = 4 }) => xs.map((x) => <path key={x} d={`M${x} 13V195`} stroke={color} strokeWidth={w} />);

function Head({ id, open }) {
  return (
    <div className="ml-[17px] flex h-[49px] w-[608px] items-center bg-[#2d323d] pl-[11px] pr-[14px] font-bold text-white">
      <span>Kiểu chia</span>
      <span className="ml-[18px] text-[#1b8fe8]">{id}</span>
      <button type="button" aria-label={(open ? "Collapse " : "Expand ") + id} className="ml-auto flex h-[34px] w-[34px] items-center justify-center rounded-full bg-white">
        <svg aria-hidden="true" width="16" height="10" viewBox="0 0 16 10" fill="none" stroke="#2d323d" strokeWidth="4"><path d={open ? "M1 9L8 2L15 9" : "M1 1L8 8L15 1"} /></svg>
      </button>
    </div>
  );
}

const params = [
  ["Khoảng cách", "5.0"],
  ["Chiều rộng đi bộ (m)", "4.0"],
  ["Khoảng cách bố trí", "70.0"],
  ["Bố trí 2 lớp", "Yes"],
  ["Lối đi bộ giữa", "0.0"],
];

function ParamTable() {
  return (
    <table className="ml-[57px] w-[547px] border-collapse">
      <tbody>
        {params.map(([k, v], i) => (
          <tr key={k} className="h-[50px] border-2 border-t-0 border-[#2d343f]">
            <th scope="row" className="w-[359px] border-r-2 border-[#2d343f] pl-3 text-left font-normal text-[#c3c8cf]">
              <label htmlFor={"p" + i}>{k}</label>
            </th>
            <td className="relative p-0 text-[#e8eaed]">
              {v === "Yes" ? (
                <>
                  <select id={"p" + i} defaultValue="Yes" className="h-[40px] w-full appearance-none bg-transparent pl-[14px] outline-none"><option>Yes</option><option>No</option></select>
                  <svg aria-hidden="true" width="12" height="7" viewBox="0 0 12 7" fill="none" stroke="#6b7380" strokeWidth="1.5" className="pointer-events-none absolute right-[14px] top-5"><path d="M1 1L6 6L11 1" /></svg>
                </>
              ) : (
                <input id={"p" + i} defaultValue={v} className="h-[40px] w-full bg-transparent pl-[18px] outline-none" />
              )}
            </td>
          </tr>
        ))}
      </tbody>
    </table>
  );
}

const Row = ({ className = "mt-5", children }) => <div className={"ml-[47px] flex h-[208px] w-[558px] gap-[21px] " + className}>{children}</div>;

function StdActions() {
  return (
    <div className="flex flex-1 flex-col gap-[15px]">
      <Act className="text-[#e80c0c]">Pick <PickMark /></Act>
      <Act className="text-[#0ce80c]">Two Point</Act>
      <div className="flex flex-1 gap-[11px]">
        <Act label="Multiple areas" className="text-[#12d212]"><Penta n={3} /></Act>
        <Act label="Single area" className="text-[#f0e814]"><Penta /></Act>
      </div>
    </div>
  );
}

function Palette() {
  const topX = [56, 81, 106, 131, 192, 217, 241, 266];
  const sideY = [41, 54, 79, 104, 129, 155, 168];
  const fan = [[17, 45, 34, 155], [53, 42, 63, 149], [87, 38, 94, 148], [121, 36, 126, 147], [201, 36, 198, 147], [235, 38, 228, 148], [270, 42, 260, 149], [306, 45, 290, 155]];
  return (
    <aside className="flex w-[696px] shrink-0 bg-[#3b4453] text-[23px]">
      <div className="flex w-[645px] flex-col">
        <div className="mt-[3px] flex h-[46px] items-center gap-[7px] rounded-tr bg-[#2e343f] pl-[27px] text-[23px] text-[#cfd3d8]">
          <SBox />STYLED DIVIDING AREA<SBox />
        </div>
        <div className="mt-[2px]"><Head id="SD1" open /></div>
        <div className="mt-[1px]"><ParamTable /></div>
        <Row className="mt-6">
          <Preview>
            <Baseline />
            <Verticals xs={[59, 89, 119, 204, 234, 264]} color="#7a3d05" />
            <Verticals xs={[149, 174]} color="#ece81b" />
            <rect x="155" y="98" width="12" height="12" rx="2" fill="#f0f" />
          </Preview>
          <StdActions />
        </Row>
        <div className="mt-[30px]"><Head id="SD2" /></div>
        <Row className="mt-[21px]">
          <Preview>
            <Baseline />
            <Verticals xs={[53, 101, 221, 270]} color="#9a9ca0" w={3} />
            <Verticals xs={[149, 174]} color="#ece81b" />
            <rect x="155" y="98" width="12" height="12" rx="2" fill="#f0f" />
          </Preview>
          <StdActions />
        </Row>
        <div className="mt-[30px]"><Head id="SD3" /></div>
        <Row className="mt-[21px]">
          <Preview>
            <path d="M32 18H291L306 31V178L291 189H32L17 178V31ZM42 41H282V168H42Z" stroke="#b5921b" strokeWidth="2" />
            <g stroke="#c9cacc" strokeWidth="2">
              {topX.map((x) => <path key={x} d={`M${x} 19V40M${x} 169V188`} />)}
              {sideY.map((y) => <path key={y} d={`M18 ${y}H41M283 ${y}H305`} />)}
            </g>
            <path d="M156 19V40M167 19V40M156 169V188M167 169V188" stroke="#a65a12" strokeWidth="3" />
          </Preview>
          <div className="flex flex-1 flex-col gap-[21px]">
            <Act className="text-[#e80c0c]">Pick <PickMark /></Act>
            <Act className="text-[#0ce80c]">Select <Penta n={3} /></Act>
          </div>
        </Row>
        <div className="mt-[30px]"><Head id="SD4" /></div>
        <Row className="mt-[21px]">
          <Preview>
            <path d="M17 45Q161 24 306 45M34 155Q161 138 290 155M33 160Q95 149 156 149M167 149Q230 149 291 160" stroke="#c9cacc" strokeWidth="2" />
            {fan.map(([a, b, c, d]) => <path key={a} d={`M${a} ${b}L${c} ${d}`} stroke="#c9cacc" strokeWidth="2" />)}
            <path d="M156 35V147M167 35V147" stroke="#a65a12" strokeWidth="3" />
            {[50, 80, 110, 141, 182, 212, 243, 273].map((x, i) => (
              <text key={x} x={x} y={i === 0 || i === 7 ? 173 : 168} textAnchor="middle" fontSize="18" fontWeight="bold" fill={i % 2 ? "#e01414" : "#fff"} fontFamily="Liberation Sans, sans-serif">12</text>
            ))}
          </Preview>
          <div className="flex flex-1 flex-col gap-[15px]">
            <Act className="text-[#f5a01a]">Pick <PickMark /></Act>
            <Act className="text-[#0ce80c]">Two Point</Act>
            <Act className="text-[#f0f014]">Single <Penta /></Act>
          </div>
        </Row>
        <div className="mt-auto mb-2 h-[2px] bg-[#2d343f]" />
      </div>
      <div className="mt-[53px] flex w-11 flex-col text-[23px]">
        <PalTab active>1.Style</PalTab>
        <PalTab>2.Block</PalTab>
        <PalTab>3.Hatch</PalTab>
      </div>
    </aside>
  );
}

function PalTab({ active, children }) {
  return (
    <button type="button" className={"flex h-[264px] items-center justify-center rounded-r-lg border-2 border-[#272d37] " + (active ? "border-l-0 text-[#e4e6e9]" : "bg-[#2f3642] text-[#a9aeb6]")}>
      <span className="rotate-180 [writing-mode:vertical-rl]">{children}</span>
    </button>
  );
}

/* ---------- legend drawing ---------- */

const GREEN = "#14d614";
const YEL = "#f8f80a";

/* A linetype: `alt` is "solid", "dot" (dash-dot lead-in) or "dots" (dash-dot-dot lead-in). */
function Linetype({ h, up = 15, alt = "solid", start = 39, end = 501, at, pad, text, slash, color = GREEN, thick = 3, labelColor, zed }) {
  const y = h - up;
  const [l, r] = pad;
  let d = "";
  let cur = start;
  const seg = (a, b) => { d += `M${a} ${y}H${b}`; };
  const slashes = [];
  for (const c of at) {
    const e = c - l;
    if (alt === "solid") {
      seg(cur, e);
      if (slash) slashes.push(c - slash);
    } else if (alt === "dot") {
      seg(cur, e - 57);
      seg(e - 53, e - 51);
      seg(e - 47, e - 28);
      seg(e - 24, e - 22);
      seg(e - 18, e);
      if (slash) slashes.push(e - 38);
    } else {
      seg(cur, e - 36);
      seg(e - 31, e - 29);
      seg(e - 25, e - 23);
      seg(e - 18, e);
      if (slash) slashes.push(e - 9);
    }
    cur = c + r;
  }
  seg(cur, end);
  return (
    <svg role="img" aria-label={text || "cable"} width="100%" height={h} className="block overflow-visible">
      <path d={d} stroke={color} strokeWidth={thick} />
      {slashes.map((x) => <path key={x} d={`M${x - 5} ${y + 7}L${x + 2} ${y - 7}M${x - 1} ${y + 7}L${x + 6} ${y - 7}`} stroke={color} strokeWidth="1.5" />)}
      {at.map((c) =>
        zed ? (
          <Zed key={c} x={c} y={y} />
        ) : (
          <text key={c} x={c} y={y + 6} textAnchor="middle" fontSize="16" stroke={labelColor || "none"} strokeWidth="1" fill={labelColor || color} fontFamily="Liberation Sans, sans-serif">{text}</text>
        )
      )}
    </svg>
  );
}

const Zed = ({ x, y }) => <path d={`M${x - 12} ${y - 6}h17l-12 13h17m-5 -5l6 6l-5 3`} stroke="#c9c91c" strokeWidth="2" fill="none" />;

function Segments({ h, up, segs, thick, waves = [], zeds = [], slashes = [] }) {
  const y = h - up;
  return (
    <svg role="img" aria-label="line symbol" width="100%" height={h} className="block overflow-visible" fill="none">
      <path d={segs.map(([a, b]) => `M${a} ${y}H${b}`).join("")} stroke={YEL} strokeWidth={thick} />
      {waves.map((x) => <path key={x} d={`M${x} ${y - 17}q2 4 0 7q-2 4 0 7q2 3 0 6q-2 4 0 7q2 4 0 7`} stroke="#d8d81a" strokeWidth="2" />)}
      {zeds.map((x) => <Zed key={x} x={x} y={y} />)}
      {slashes.map((x) => <path key={x} d={`M${x - 5} ${y + 7}L${x + 2} ${y - 7}M${x - 1} ${y + 7}L${x + 6} ${y - 7}`} stroke={YEL} strokeWidth="1.5" />)}
    </svg>
  );
}

function Comb({ h, from, to, step, color, lines, className = "" }) {
  let d = "";
  for (const { up, tall, low } of lines) {
    const y = h - up;
    d += `M${from} ${y}H${to}`;
    let i = 0;
    for (let x = from + step; x <= to; x += step) {
      d += `M${x.toFixed(1)} ${y}v${i % 2 ? tall : low}`;
      i++;
    }
  }
  return (
    <svg role="img" aria-label="slope symbol" width="100%" height={h} className={"block overflow-visible " + className}>
      <path d={d} stroke={color} strokeWidth="2" fill="none" />
    </svg>
  );
}

const kinds = {
  k22: { text: "22kv", pad: [18, 20], one: [131, 268, 405], two: [127, 240, 354, 467], three: [105, 196, 286, 377, 468], s: [160, 289, 419], gap: 59 },
  k04: { text: "0.4kv", pad: [20, 21], one: [130, 269, 408], two: [182, 298, 415], three: [147, 241, 334, 428], s: [158, 290, 422], gap: 61 },
  cs: { text: "CS", pad: [12, 12], one: [147, 270, 392], two: [150, 250, 348, 448], three: [97, 173, 250, 326, 403, 480], s: [119, 233, 348, 463], gap: 54 },
  k04cs: { text: "0.4kv+CS", pad: [36, 38], one: [181, 354], two: [146, 297, 447], three: [159, 287, 415], s: [205, 371], gap: 77 },
};

function cable(h, k, buried, selected) {
  const q = kinds[k];
  return [
    <Linetype key="a" h={h} start={38} end={500} at={buried ? q.s : q.one} pad={q.pad} text={q.text} slash={buried ? q.gap : 0} />,
    <Linetype key="b" h={h} alt="dot" at={q.two} pad={q.pad} text={q.text} slash={buried} />,
    <Linetype key="c" h={h} alt="dots" at={q.three} pad={q.pad} text={q.text} slash={buried} color={selected ? "#22a845" : GREEN} labelColor={selected ? "#c4e8c8" : undefined} />,
  ];
}

const heading = "pl-1 text-[22px]";
const item = "pl-[23px] text-[23px]";

const rows = [
  { h: 54, n: "1", t: "HỆ THỐNG GIAO THÔNG", c: heading },
  {
    h: 38, t: "- Ngầm", c: item,
    sym: [
      <Segments key="a" h={38} up={23} thick={8} segs={[[38, 117], [121, 139], [143, 162], [166, 184], [188, 206], [212, 326], [332, 349], [353, 372], [376, 394], [398, 417], [422, 500]]} waves={[119, 209, 328, 419, 496]} />,
      <Segments key="b" h={38} up={23} thick={8} segs={[[39, 127], [133, 151], [156, 158], [162, 180], [184, 186], [190, 207], [213, 327], [332, 350], [354, 356], [360, 379], [383, 385], [389, 406], [412, 501]]} waves={[130, 210, 329, 409, 497]} />,
      <Segments key="c" h={38} up={23} thick={8} segs={[[40, 104], [110, 145], [155, 157], [165, 167], [178, 213], [218, 331], [336, 371], [382, 384], [393, 395], [405, 440], [444, 510]]} waves={[107, 215, 334, 442, 506]} />,
    ],
  },
  { h: 76, n: "2", t: "CHUẨN BỊ KỸ THUẬT", c: heading },
  {
    h: 40, t: "- Đê", c: item,
    comb: <Comb h={40} from={115} to={274} step={4.6} color="#d9dadc" lines={[{ up: 18, tall: -10, low: -6 }, { up: 9, tall: 10, low: 6 }]} />,
    sym: [<Comb key="a" h={40} from={38} to={500} step={5.7} color="#b5b51c" lines={[{ up: 27, tall: -9, low: -4 }, { up: 5, tall: 9, low: 4 }]} />],
  },
  {
    h: 73, t: "- Ta luy", c: item,
    comb: <Comb h={73} from={115} to={274} step={4.6} color="#d9dadc" lines={[{ up: 7, tall: 15, low: 13 }]} />,
    sym: [<Comb key="a" h={73} from={38} to={500} step={5.7} color="#b5b51c" lines={[{ up: 25, tall: -14, low: -12 }, { up: 4, tall: 14, low: 12 }]} />],
  },
  { h: 93, n: "3", t: "CẤP ĐIỆN", c: "pl-[7px] text-[22px]" },
  { h: 33, t: "* Tuyến:", c: "pl-[25px] text-[28px]" },
  { h: 32, t: "- Nổi", c: "pl-12 text-[23px]", sym: cable(32, "k22") },
  { h: 57, sym: cable(57, "k04") },
  { h: 57, sym: cable(57, "cs") },
  { h: 57, sym: cable(57, "k04cs", false, true) },
  { h: 72, t: "- Ngầm", c: "pl-12 text-[23px]", sym: cable(72, "k22", true) },
  { h: 57, sym: cable(57, "k04", true) },
  { h: 57, sym: cable(57, "cs", true) },
  { h: 56, sym: cable(56, "k04cs", true) },
  { h: 60, n: "6", t: "THÔNG TIN LIÊN LẠC", c: heading },
  { h: 37, t: "- Tuyến cáp", c: item },
  {
    h: 40, t: "+ Nổi", c: "pl-[43px] text-[23px]",
    sym: [
      <Linetype key="a" h={40} up={10} start={38} end={507} at={[105, 188, 272, 356, 441]} pad={[12, 13]} color={YEL} thick={5} zed />,
      <Segments key="b" h={40} up={10} thick={5} zeds={[192, 310, 427]} segs={[[39, 105], [111, 129], [134, 152], [156, 174], [206, 223], [229, 247], [252, 270], [275, 292], [324, 341], [347, 365], [369, 387], [392, 410], [442, 508]]} />,
      <Linetype key="c" h={40} up={10} alt="dot" end={510} at={[151, 252, 353, 453]} pad={[12, 13]} color={YEL} thick={5} zed />,
    ],
  },
  {
    h: 40, t: "+ Chìm", c: "pl-[43px] text-[23px]",
    sym: [
      <Linetype key="a" h={40} up={1} start={38} end={507} at={[158, 303, 449]} pad={[12, 13]} slash={72} color={YEL} thick={5} zed />,
      <Segments key="b" h={40} up={1} thick={5} zeds={[190, 321, 452]} slashes={[123, 254, 385]} segs={[[39, 86], [92, 110], [114, 132], [137, 156], [160, 178], [200, 217], [222, 240], [245, 264], [267, 286], [290, 309], [331, 348], [353, 372], [375, 394], [398, 417], [421, 439], [461, 508]]} />,
      <Linetype key="c" h={40} up={1} alt="dot" end={510} at={[151, 252, 353, 453]} pad={[12, 13]} slash color={YEL} thick={5} zed />,
    ],
  },
  { h: 31 },
];

function Legend() {
  const edge = "border-2 border-[#c9ccd1]";
  const side = "border-x-2 border-[#c9ccd1] p-0 align-bottom";
  return (
    <table className="ml-[487px] w-[1976px] table-fixed border-collapse border-2 border-[#c9ccd1] text-white [font-family:'Liberation_Sans',sans-serif]">
      <colgroup>
        <col className="w-[85px]" /><col className="w-[285px]" /><col /><col /><col />
      </colgroup>
      <thead className="text-[28px] leading-[30px]">
        <tr className="h-[66px]">
          <th rowSpan="2" className={edge + " p-0 font-normal"}>STT</th>
          <th rowSpan="2" className={edge + " p-0 font-normal"}>Nhóm đất/ Loại đất</th>
          <th colSpan="3" className={edge + " pr-2 pt-2 font-normal"}>Ký hiệu</th>
        </tr>
        <tr className="h-[64px]">
          <th className={edge + " pr-4 font-normal"}>Hiện trạng</th>
          <th className={edge + " pr-11 font-normal"}>Đợt đầu</th>
          <th className={edge + " pr-12 font-normal"}>Dài hạn</th>
        </tr>
        <tr className="h-[44px]">
          <th className={edge + " font-normal"}>1</th>
          <th className={edge + " pr-9 font-normal"}>2</th>
          <th className={edge} /><th className={edge} /><th className={edge} />
        </tr>
      </thead>
      <tbody className="leading-[28px]">
        {rows.map((r, i) => (
          <tr key={i} style={{ height: r.h }}>
            <td className={side + " pr-2 text-center text-[22px]"}>{r.n}</td>
            <td className={side + " relative whitespace-nowrap"}>
              <div className={r.c}>{r.t}</div>
              {r.comb && <div className="absolute inset-x-0 bottom-0">{r.comb}</div>}
            </td>
            {[0, 1, 2].map((c) => <td key={c} className={side}>{r.sym && r.sym[c]}</td>)}
          </tr>
        ))}
      </tbody>
    </table>
  );
}

/* ---------- viewport ---------- */

function ViewCube() {
  return (
    <div className="absolute right-[44px] top-[30px]">
      <svg aria-hidden="true" width="240" height="266" viewBox="0 0 240 266" fill="none" className="overflow-visible">
        <circle cx="120" cy="133" r="112" stroke="#4c5159" strokeWidth="18" />
        <rect x="100" y="6" width="40" height="36" fill="#212530" />
        <rect x="100" y="228" width="40" height="36" fill="#212530" />
        <rect x="-4" y="114" width="30" height="38" fill="#212530" />
        <rect x="216" y="114" width="30" height="38" fill="#212530" />
        <rect x="69" y="82" width="102" height="102" fill="#a6a9b0" />
        <rect x="83" y="96" width="74" height="74" fill="#bdc0c6" />
        <g fill="#a2a6ac" fontSize="29" fontWeight="bold" textAnchor="middle" fontFamily="Liberation Sans, sans-serif">
          <text x="120" y="32">N</text>
          <text x="120" y="257">S</text>
          <text x="8" y="145">W</text>
          <text x="232" y="145">E</text>
        </g>
        <text x="120" y="142" fill="#4a4f58" fontSize="22" fontWeight="bold" textAnchor="middle" fontFamily="Liberation Sans, sans-serif">TOP</text>
      </svg>
    </div>
  );
}

function CommandLine() {
  const chip = "w-fit rounded px-[4px] leading-[31px]";
  return (
    <div className="mt-auto pl-[841px] text-[24px] [font-family:'DejaVu_Sans_Mono',monospace]">
      <div className="ml-[125px] flex flex-col gap-[10px]">
        <p className={chip + " bg-[#4d4e50] text-[#b4b4b4]"}>Command:</p>
        <p className={chip + " bg-[#565759] text-[#c4c4c4]"}>Command:</p>
        <p className={chip + " bg-[#606163] text-white"}>Command: *Cancel*</p>
      </div>
      <div className="mt-[4px] flex h-[53px] w-[1412px] items-center bg-[#2b303a]">
        <Ico w={2} h={36} vb="0 0 2 36" className="ml-[15px]"><path d="M1 0V36" strokeDasharray="3 3" /></Ico>
        <button type="button" aria-label="Close command line" className="ml-[14px]"><Ico w={20} h={20} vb="0 0 20 20"><path d="M2 2L18 18M18 2L2 18" strokeWidth="3" /></Ico></button>
        <button type="button" aria-label="Customize" className="ml-[20px]"><Ico w={32} h={32}><path d="M3 29L19 13" strokeWidth="5" /><path d="M29 8a7 7 0 1 1-6-6l-3 6 4 4z" fill={W} stroke="none" /></Ico></button>
        <label className="ml-auto flex h-[48px] w-[1300px] items-center rounded bg-[#bcbdbf] pl-2">
          <Ico w={34} h={26} vb="0 0 34 26"><rect x="1" y="1" width="32" height="24" stroke="#5a5b5d" fill="#c9cacb" /><path d="M1 3H33V8H1Z" fill="#5a5b5d" stroke="none" /><path d="M5 12l5 4-5 4M12 20h7" stroke="#5a5b5d" /></Ico>
          <svg aria-hidden="true" width="14" height="9" viewBox="0 0 14 9" className="ml-1"><path d="M0 0H14L7 9Z" fill="#4b4c4e" /></svg>
          <input aria-label="Command" placeholder="Type a command" className="ml-[13px] flex-1 bg-transparent italic outline-none placeholder:text-[#626366]" />
          <svg aria-hidden="true" width="14" height="9" viewBox="0 0 14 9" className="mr-[7px]"><path d="M0 9H14L7 0Z" fill="#4b4c4e" /></svg>
        </label>
      </div>
    </div>
  );
}

function Viewport() {
  return (
    <main className="relative flex min-w-0 flex-1 flex-col overflow-hidden bg-[#212530]">
      <div className="flex h-[172px] items-start pl-1 pt-[9px] text-[23px] text-[#d5d8dc]">
        <button type="button">[−]</button><button type="button">[Top]</button><button type="button">[2D Wireframe]</button>
      </div>
      <Legend />
      <CommandLine />
      <p className="absolute left-[1077px] top-[678px] text-[29px] font-extrabold leading-9 text-[#fb3b3f] [font-family:'Open_Sans',sans-serif]">Thuvienbanveso.vn</p>
      <div className="absolute left-[1889px] right-0 top-[1139px] h-[2px] bg-[#9a9ea5]" />
      <div className="absolute bottom-0 left-[2706px] top-[321px] w-[2px] bg-[#9a9ea5]" />
      <div className="absolute left-[2682px] top-[1115px] h-[51px] w-[51px] border-2 border-[#a9adb3] bg-[#212530]" />
      <svg aria-hidden="true" width="150" height="160" viewBox="0 0 150 160" fill="none" stroke="#b4b7bc" strokeWidth="2" className="absolute left-[477px] top-[1262px]">
        <path d="M12 12L25 26L38 12M25 26V37M117 146L142 116M117 116L142 146" />
        <rect x="2" y="134" width="18" height="18" stroke="#d5d8dc" />
      </svg>
      <ViewCube />
      <button type="button" className="absolute right-[118px] top-[337px] h-[35px] w-[92px] rounded-md border-2 border-[#9498a0] bg-[#7d828b] text-left">
        <span className="block pl-[6px] text-[18px] leading-[30px] text-[#d5d8dc]">WCS</span>
      </button>
    </main>
  );
}

/* ---------- status bar ---------- */

const cell = "flex h-12 items-center justify-center bg-[#3b4453]";
const lit = "flex h-12 w-[46px] items-center justify-center bg-[#5c8fc4]";

function Tog({ name, on, w = "w-[48px]", children }) {
  return <button type="button" aria-label={name} aria-pressed={!!on} className={on ? lit : cell + " " + w}><Ico>{children}</Ico></button>;
}
const Opt = ({ name, w = "w-[34px]" }) => <button type="button" aria-label={name + " options"} className={cell + " " + w}><Down big /></button>;

function StatusBar() {
  return (
    <footer className="relative flex h-[97px] justify-between border-y-2 border-[#3d4654] bg-[#222830]">
      <div className="flex h-[34px] items-start pl-4 text-[23px]">
        <button type="button" className="h-[34px] w-[124px] bg-[#3b4453] font-bold text-white [clip-path:polygon(0_0,100%_0,94%_60%,86%_100%,14%_100%,6%_60%)]">Model</button>
        <button type="button" className="h-[34px] w-[126px] bg-[#2e3540] text-[#a9aeb6] [clip-path:polygon(0_0,100%_0,94%_60%,86%_100%,14%_100%,6%_60%)]">Layout1</button>
        <button type="button" className="ml-1 h-[34px] w-[126px] bg-[#2e3540] text-[#a9aeb6] [clip-path:polygon(0_0,100%_0,94%_60%,86%_100%,14%_100%,6%_60%)]">Layout2</button>
        <button type="button" aria-label="New layout" className="ml-3 flex h-[31px] w-11 items-center justify-center rounded-br-2xl rounded-tl-2xl bg-[#2e3540]"><Ico w={16} h={16} vb="0 0 16 16"><path d="M8 0V16M0 8H16" strokeWidth="3" stroke="#a9aeb6" /></Ico></button>
      </div>
      <p className="absolute bottom-[-10px] left-1/2 z-10 -translate-x-1/2 whitespace-nowrap text-[29px] font-extrabold leading-9 text-[#c6c6c6]">Ban quyen: Thuvienbanveso.vn</p>
      <div className="flex items-end gap-2 text-[23px] text-[#e8eaed]">
        <button type="button" className={cell + " w-[97px]"}>MODEL</button>
        <div className="flex">
          <Tog name="Grid"><path d="M8 1V31M16 1V31M24 1V31M0 8H32M0 16H32M0 24H32" strokeWidth="1.5" /></Tog>
          <Tog name="Snap"><path d="M5 6H28M5 12H28M5 18H28M5 24H28" strokeWidth="3" strokeDasharray="4 6" /></Tog>
          <Opt name="Snap" />
        </div>
        <div className="flex">
          <Tog name="Ortho"><path d="M2 0V31H31M2 21H11V31" strokeWidth="1.5" /></Tog>
          <Tog name="Polar tracking" on><circle cx="15" cy="17" r="12" /><path d="M26 3L15 17H31" /></Tog>
          <Opt name="Polar" />
          <Tog name="Isodraft"><path d="M6 3L26 27" stroke="#c96a78" /><path d="M16 0V30" stroke="#4fae6b" /></Tog>
          <Opt name="Isodraft" />
          <Tog name="Object snap tracking" on><path d="M28 1L3 28H31" /><rect x="11" y="13" width="6" height="6" fill="#fff" stroke="none" /></Tog>
          <span className="w-[2px] bg-[#3b4453]" />
          <Tog name="Object snap" on><rect x="5" y="6" width="25" height="24" /><rect x="1" y="2" width="8" height="8" fill="#5c8fc4" /></Tog>
          <Opt name="Object snap" />
        </div>
        <div className="flex">
          <Tog name="Annotation visibility" on><path d="M14 0L26 31L14 22L4 31Z" fill="#fff" stroke="none" /><circle cx="26" cy="6" r="5" /></Tog>
          <Tog name="Auto scale"><path d="M12 3L22 30L12 22L2 30Z" fill={W} stroke="none" /><path d="M24 0l-5 8h4l-2 8 7-9h-4l4-7z" fill={W} stroke="none" /></Tog>
          <Tog name="Annotation scale"><path d="M16 2L26 30L16 22L6 30Z" fill={W} stroke="none" /></Tog>
          <button type="button" className={cell + " w-[68px] gap-[6px]"}>1:1<Down big /></button>
        </div>
        <div className="flex gap-[2px]">
          <div className="flex">
            <Tog name="Workspace"><circle cx="16" cy="16" r="8" strokeWidth="6" /><path d="M16 0V5M16 27V32M0 16H5M27 16H32M5 5L8 8M27 27L24 24M27 5L24 8M5 27L8 24" strokeWidth="5" /></Tog>
            <Opt name="Workspace" />
          </div>
          <Tog name="Annotation monitor"><path d="M16 1V31M1 16H31" strokeWidth="3" /></Tog>
        </div>
        <Tog name="Isolate objects"><rect x="3" y="2" width="12" height="11" strokeWidth="1.5" /><circle cx="25" cy="15" r="6" strokeWidth="1.5" /><path d="M14 20L22 31H7Z" strokeWidth="1.5" /></Tog>
        <button type="button" aria-label="Hardware acceleration" className={cell + " -ml-1 w-[60px]"}>
          <Ico s={48} vb="0 0 48 48"><path d="M2 0H30Q44 8 44 27L30 40H2Z" fill="#2a6cb0" stroke="none" /><path d="M12 0V26M0 10H26" strokeWidth="3" /><path d="M2 28H24V44H2Z" fill="#f5b52c" stroke="none" /><path d="M22 34L30 44L46 26" stroke="#4caf50" strokeWidth="6" /></Ico>
        </button>
        <div className="-ml-1 flex">
          <Tog name="Clean screen" w="w-[50px]"><rect x="1" y="4" width="30" height="23" /><path d="M18 13l7-5v5M14 19l-7 5v-5" /></Tog>
          <Tog name="Customization"><path d="M0 3H32M0 15H32M0 27H32" strokeWidth="4" /></Tog>
        </div>
      </div>
    </footer>
  );
}

/* ---------- taskbar ---------- */

const Cam = ({ play }) => (
  <g stroke="none">
    <rect x="1" y="2" width="46" height="34" rx="4" fill="#7a2a6b" stroke="#c9a9c4" strokeWidth="1" />
    {play ? <path d="M3 8l11 5-11 6z" fill="#2fbf3a" /> : <circle cx="8" cy="11" r="6" fill="#f04040" />}
    <circle cx="20" cy="13" r="4" fill="#fff" /><circle cx="29" cy="13" r="4" fill="#fff" />
    <rect x="16" y="17" width="14" height="10" fill="#fff" /><path d="M30 21l6-3v9l-6-3z" fill="#fff" />
    <path d="M21 36H27V42H36V46H12V42H21Z" fill="#e8e8e8" />
  </g>
);

const G = "none";
const apps = [
  ["Copilot", 0, <g key="g" stroke={G}><path d="M6 10Q8 3 16 3H30L20 30Q17 35 10 35Q0 34 2 28Z" fill="#2aa7d8" /><path d="M2 28L6 16 20 20 17 31Q14 36 8 34Z" fill="#8bc34a" /><path d="M28 14H40Q46 16 44 24L38 38H24Z" fill="#d35bd0" /><rect x="12" y="33" width="34" height="15" rx="3" fill="#fcc419" /><text x="29" y="45" fontSize="13" fontWeight="bold" textAnchor="middle" fill="#111">PRE</text></g>],
  ["Chrome", 1, <g key="g" stroke={G}><circle cx="24" cy="24" r="24" fill="#fcc31e" /><path d="M24 24L3 12A24 24 0 0 1 45 12H24Z" fill="#e33b2e" /><path d="M3 12L14 30 24 36 20 48A24 24 0 0 1 3 12Z" fill="#2a9d4a" /><circle cx="24" cy="24" r="12" fill="#fff" /><circle cx="24" cy="24" r="9" fill="#2f77e0" /></g>],
  ["Registry", 0, <g key="g" stroke={G}><path d="M5 17L22 12L38 17V36L22 43L5 36Z" fill="#1593cf" /><path d="M5 17L22 12L38 17L22 23Z" fill="#5ed0f3" /><path d="M22 23V43M5 26L22 33L38 26M13 20V40M30 20V40" stroke="#0a5f93" strokeWidth="2" /><path d="M24 0l6 3v7l-6 3-5-3V3zM36 12l5 3-2 6-5-1z" fill="#35b6e8" /></g>],
  ["Resource Monitor", 0, <g key="g" stroke={G}><rect x="0" y="6" width="48" height="36" rx="2" fill="#9aa3ad" /><rect x="3" y="9" width="42" height="30" fill="#eef3f8" /><path d="M4 38V32L9 34 14 14 19 32 25 30 29 20 34 32 39 26 44 34V38Z" fill="#7cc3ee" stroke="#3d97d4" /></g>],
  ["File Explorer", 1, <g key="g" stroke={G}><path d="M0 6Q0 3 3 3H14L19 9H45Q48 9 48 12V44H0Z" fill="#e3a514" /><path d="M0 14H20L24 9H45Q48 9 48 12V43Q48 46 45 46H3Q0 46 0 43Z" fill="#fbd23e" /><path d="M8 46V36Q8 31 13 31H36Q41 31 41 36V46Z" fill="#1279c4" /><path d="M15 39H34" stroke="#0a4e86" strokeWidth="3" /></g>],
  ["Edge", 1, <g key="g" stroke={G}><circle cx="24" cy="24" r="24" fill="#1477d4" /><path d="M1 20Q6 0 25 0Q48 2 48 23Q45 33 33 32Q27 30 30 26Q32 18 24 15Q10 11 1 20Z" fill="#38c7b0" /><path d="M26 0Q48 2 48 23Q45 33 33 32Q40 14 26 0Z" fill="#5bdc70" /><path d="M18 22Q12 40 30 43Q38 44 44 38Q34 52 18 47Q6 38 18 22Z" fill="#0b3f86" /></g>],
  ["Calculator", 0, <g key="g" stroke={G}><rect x="6" y="0" width="36" height="48" rx="3" fill="#7e8a96" /><rect x="10" y="4" width="28" height="9" rx="1" fill="#3fcdf5" /><path d="M10 20H38M10 30H38M10 40H38" stroke="#e6eaee" strokeWidth="7" strokeDasharray="7.5 2.5" /><rect x="30" y="26" width="8" height="18" fill="#0c4d8a" /></g>],
  ["Remote Desktop", 0, <g key="g" stroke={G}><circle cx="24" cy="24" r="24" fill="#2b72bf" /><rect x="12" y="13" width="24" height="18" rx="2" fill="#1c5698" stroke="#fff" strokeWidth="2" /><path d="M15 28L32 16V28Z" fill="#fff" /><path d="M21 31H27V34H32V36H16V34H21Z" fill="#fff" /></g>],
  ["Zalo", 1, <g key="g" stroke={G}><rect x="0" y="0" width="48" height="48" rx="14" fill="#0a68e8" /><path d="M10 0H34Q48 0 48 14V30Q48 42 34 42H14Q10 46 4 44Q6 42 6 38Q2 30 4 14Q5 2 14 0Z" fill="#fff" /><text x="27" y="28" fontSize="16" fontWeight="bold" textAnchor="middle" fill="#0a56c8">Zalo</text></g>],
  ["Visual Studio", 0, <g key="g" stroke={G}><path d="M0 12L4 10 34 36V48L0 15Z" fill="#8c4fc0" /><path d="M0 36L4 39 34 12V0L0 33Z" fill="#6d3aa5" /><path d="M0 12L6 15V34L0 37Z" fill="#6d3aa5" /><path d="M34 0L48 6V42L34 48Z" fill="#a672e0" /></g>],
  ["AutoCAD", 2, <g key="g" stroke={G}><rect width="48" height="48" fill="#f7e6e0" /><path d="M20 5H29L42 41H34L30 31H18L14 41H7Z" fill="#b3181d" /><path d="M24 13L19 26H28Z" fill="#f7e6e0" /><path d="M8 34Q22 20 40 34L38 30Q22 18 10 30Z" fill="#7d1014" /></g>],
  ["Notepad++", 1, <g key="g" stroke={G}><path d="M3 6H38V40L3 46Z" fill="#f4f5f2" /><path d="M3 8H38" stroke="#888" strokeWidth="3" strokeDasharray="2 2" /><path d="M4 26Q12 16 24 22Q36 24 34 36Q30 44 5 45Z" fill="#74cc2e" /><circle cx="16" cy="26" r="5" fill="#c9f0a0" stroke="#222" /><circle cx="26" cy="20" r="4" fill="#c9f0a0" stroke="#222" /><path d="M10 34Q18 38 28 32" stroke="#1c4a08" strokeWidth="2" fill="none" /><path d="M46 2L36 42" stroke="#e6951c" strokeWidth="4" /></g>],
  ["Camtasia Recorder", 1, <Cam key="g" />],
  ["Revit", 0, <g key="g" stroke={G}><rect width="48" height="48" fill="#dfe8f3" /><path d="M13 6H27Q37 7 36 16Q35 23 30 25L37 42H28L22 27H20L19 42H12Z" fill="#2f6fa8" /><path d="M20 12V21H25Q29 20 29 16Q28 12 25 12Z" fill="#dfe8f3" /></g>],
  ["Revit RVT", 0, <g key="g" stroke={G}><path d="M2 8L10 0H42V36H2Z" fill="#1769ff" /><path d="M2 8L10 0V36H2Z" fill="#5b97ff" /><rect x="4" y="34" width="42" height="14" rx="2" fill="#0b3fa8" /><text x="26" y="28" fontSize="25" fontWeight="bold" textAnchor="middle" fill="#fff">R</text><text x="25" y="45" fontSize="11" fontWeight="bold" textAnchor="middle" fill="#fff">RVT</text></g>],
  ["Excel", 0, <g key="g" stroke={G}><rect x="22" y="8" width="22" height="32" fill="#fff" /><path d="M26 13H42M26 19H42M26 25H42M26 31H42M26 36H42" stroke="#1d7444" strokeWidth="3" strokeDasharray="6 2" /><path d="M4 8L28 3V45L4 40Z" fill="#1d7444" /><path d="M10 16L20 32M20 16L10 32" stroke="#fff" strokeWidth="3" /></g>],
  ["CAD tools", 0, <g key="g" stroke={G}><rect width="48" height="48" rx="6" fill="#fff" /><path d="M12 0H42Q48 0 48 6V22H12Z" fill="#d81808" /><path d="M12 26H48V42Q48 48 42 48H12Z" fill="#1e9206" /><path d="M0 0H8V48H0Z" fill="#1e8df0" /><path d="M0 24H12" stroke="#fff" strokeWidth="2" /><rect x="5" y="17" width="13" height="14" fill="#fff" stroke="#111" strokeWidth="1.5" /><rect x="9" y="21" width="5" height="6" fill="#1e8df0" stroke="#111" /></g>],
  ["Settings", 1, <g key="g" stroke={G}><path d="M18 0H30L33 8L42 6L48 18L42 24L48 31L42 42L33 40L30 48H18L15 40L6 42L0 31L6 24L0 18L6 6L15 8Z" fill="#7b838c" /><circle cx="24" cy="24" r="11" fill="#fff" /><circle cx="24" cy="24" r="8" fill="#0f62ad" /></g>],
  ["Word", 1, <g key="g" stroke={G}><rect x="22" y="8" width="22" height="32" fill="#fff" /><path d="M28 13H42M28 18H42M28 24H42M28 29H42M28 35H42" stroke="#2a579a" strokeWidth="2" /><path d="M4 8L28 3V45L4 40Z" fill="#2a579a" /><path d="M8 17L12 31L16 19L20 31L24 17" stroke="#fff" strokeWidth="2.5" fill="none" /></g>],
  ["Camtasia", 1, <Cam key="g" play />],
];

function Taskbar() {
  return (
    <div className="grid h-[93px] grid-cols-[1fr_auto_1fr] bg-linear-to-r from-[#1f2a35] from-10% via-[#12204f] via-45% to-[#1f2a35] to-75% text-white">
      <button type="button" className="flex items-center gap-[14px] pb-1 pl-[38px] text-left text-[22px] leading-[33px]">
        <svg aria-hidden="true" width="50" height="32" viewBox="0 0 50 32">
          <path d="M11 12Q14 1 25 1Q35 1 38 10Q49 11 49 21Q48 31 38 31H10Q1 30 1 22Q1 14 11 12Z" fill="#9dbdf2" />
          <path d="M1 22Q2 13 12 13Q20 13 22 19Q28 14 34 16Q42 9 49 20Q49 30 38 31H10Q2 30 1 22Z" fill="#cfdef8" />
        </svg>
        <span className="flex flex-col"><span>19°C</span><span className="text-[#c3cad2]">Có mây</span></span>
      </button>
      <div className="flex items-center">
        <button type="button" aria-label="Start" className="flex w-[88px] justify-center">
          <svg aria-hidden="true" width="46" height="46" viewBox="0 0 46 46"><path d="M0 0H22V22H0Z" fill="#6fdcfa" /><path d="M24 0H46V22H24Z" fill="#48c3f7" /><path d="M0 24H22V46H0Z" fill="#41bdf7" /><path d="M24 24H46V46H24Z" fill="#1f9bf0" /></svg>
        </button>
        <label className="ml-1 mr-[6px] flex h-[64px] w-[439px] items-center overflow-hidden rounded-full border border-[#55648c] bg-[#33436a] pl-6 pr-1">
          <svg aria-hidden="true" width="32" height="32" viewBox="0 0 32 32" fill="none" stroke="#e4e6e9" strokeWidth="3"><circle cx="14" cy="12" r="11" /><path d="M22 20L30 29" /></svg>
          <input aria-label="Search Windows" placeholder="Search" className="ml-[16px] w-[220px] bg-transparent text-[26px] outline-none placeholder:text-[#d5d9e2]" />
          <svg aria-hidden="true" width="98" height="48" viewBox="0 0 98 48" className="ml-auto">
            <path d="M0 36L16 18 30 22 44 4 60 0 72 16 84 14 96 36 80 47H20Z" fill="#7fb4e0" />
            <path d="M30 22L44 4 50 24 58 2 66 24 84 14 96 36H10Z" fill="#b9daf2" />
            <path d="M0 36Q30 28 48 36Q70 42 96 34L80 47H14Z" fill="#e3ecfa" />
            <path d="M20 42Q50 34 78 43L72 47H22Z" fill="#39b3cf" />
          </svg>
        </label>
        {apps.map(([name, state, art]) => (
          <button key={name} type="button" aria-label={name} className="flex h-full w-[88px] items-center justify-center">
            <span className={"relative flex h-[80px] w-[78px] items-center justify-center rounded-lg " + (state === 2 ? "border border-[#3d4d78] bg-[#26355f]" : "")}>
              <svg aria-hidden="true" width="48" height="48" viewBox="0 0 48 48" fontFamily="Liberation Sans, sans-serif" fill="none">{art}</svg>
              {state === 1 && <span className="absolute bottom-[-1px] h-[6px] w-3 rounded-full bg-[#98a0b5]" />}
              {state === 2 && <span className="absolute bottom-0 h-[6px] w-8 rounded-full bg-[#4cc2ff]" />}
            </span>
          </button>
        ))}
      </div>
      <div className="flex items-center justify-end pr-[42px]">
        <button type="button" aria-label="Hidden icons"><Ico w={24} h={24} vb="0 0 24 24"><path d="M2 18L12 7L22 18" stroke="#fff" strokeWidth="2.5" /></Ico></button>
        <button type="button" aria-label="USB device" className="ml-[38px]"><Ico><path d="M10 0H23V9H10ZM7 9H26V31H7Z" stroke="#e4e6e9" strokeWidth="1.5" /><path d="M20 24l4 5 7-10" stroke="#e4e6e9" strokeWidth="1.5" /></Ico></button>
        <button type="button" aria-label="Vietnamese input" className="ml-[28px]">
          <svg aria-hidden="true" width="32" height="32" viewBox="0 0 32 32"><rect width="32" height="32" rx="2" fill="#f3aaa9" /><rect x="4" y="3" width="24" height="26" fill="#fbe9e8" /><path d="M6 6L16 27L26 6" fill="none" stroke="#cf2a24" strokeWidth="5" /></svg>
        </button>
        <button type="button" aria-label="Network and volume" className="ml-[32px] flex items-center gap-3">
          <Ico><path d="M2 13Q16 -2 30 13" stroke="#5b6672" /><path d="M6 17Q16 7 26 17M10 22Q16 16 22 22" stroke="#fff" strokeWidth="2.5" /><circle cx="16" cy="27" r="3" fill="#fff" stroke="none" /></Ico>
          <Ico><path d="M1 11H8L16 4V28L8 21H1Z" stroke="#fff" /><path d="M20 11Q24 16 20 21" stroke="#fff" /><path d="M24 7Q31 16 24 25" stroke="#7e8894" /></Ico>
        </button>
        <button type="button" className="ml-[21px] pb-[3px] text-right text-[23px] leading-[32px]"><span className="block">8:22 AM</span><span className="block">1/5/2024</span></button>
        <button type="button" aria-label="Notifications" className="ml-[18px]"><Ico w={28} h={28} vb="0 0 28 28"><path d="M14 2Q23 3 23 12V18L26 23H2L5 18V12Q5 3 14 2ZM10 23Q14 29 18 23" stroke="#fff" strokeWidth="2" /></Ico></button>
      </div>
    </div>
  );
}

export default function App() {
  return (
    <div className="flex min-h-screen flex-col overflow-hidden bg-[#222830] text-[22px] leading-[30px] [font-family:'Open_Sans','Noto_Sans',sans-serif]">
      <Header />
      <RibbonTabs />
      <Ribbon />
      <FileTabs />
      <div className="flex flex-1">
        <Palette />
        <Viewport />
        <aside className="flex w-[50px] shrink-0 flex-col bg-[#222830] pl-[6px] pt-2">
          <button type="button" className="flex w-full flex-1 items-center justify-center border-b-[5px] border-[#222830] bg-[#3b4453] text-[#dcdfe3]">
            <span className="rotate-180 [writing-mode:vertical-rl]">Properties</span>
          </button>
        </aside>
      </div>
      <StatusBar />
      <Taskbar />
    </div>
  );
}
